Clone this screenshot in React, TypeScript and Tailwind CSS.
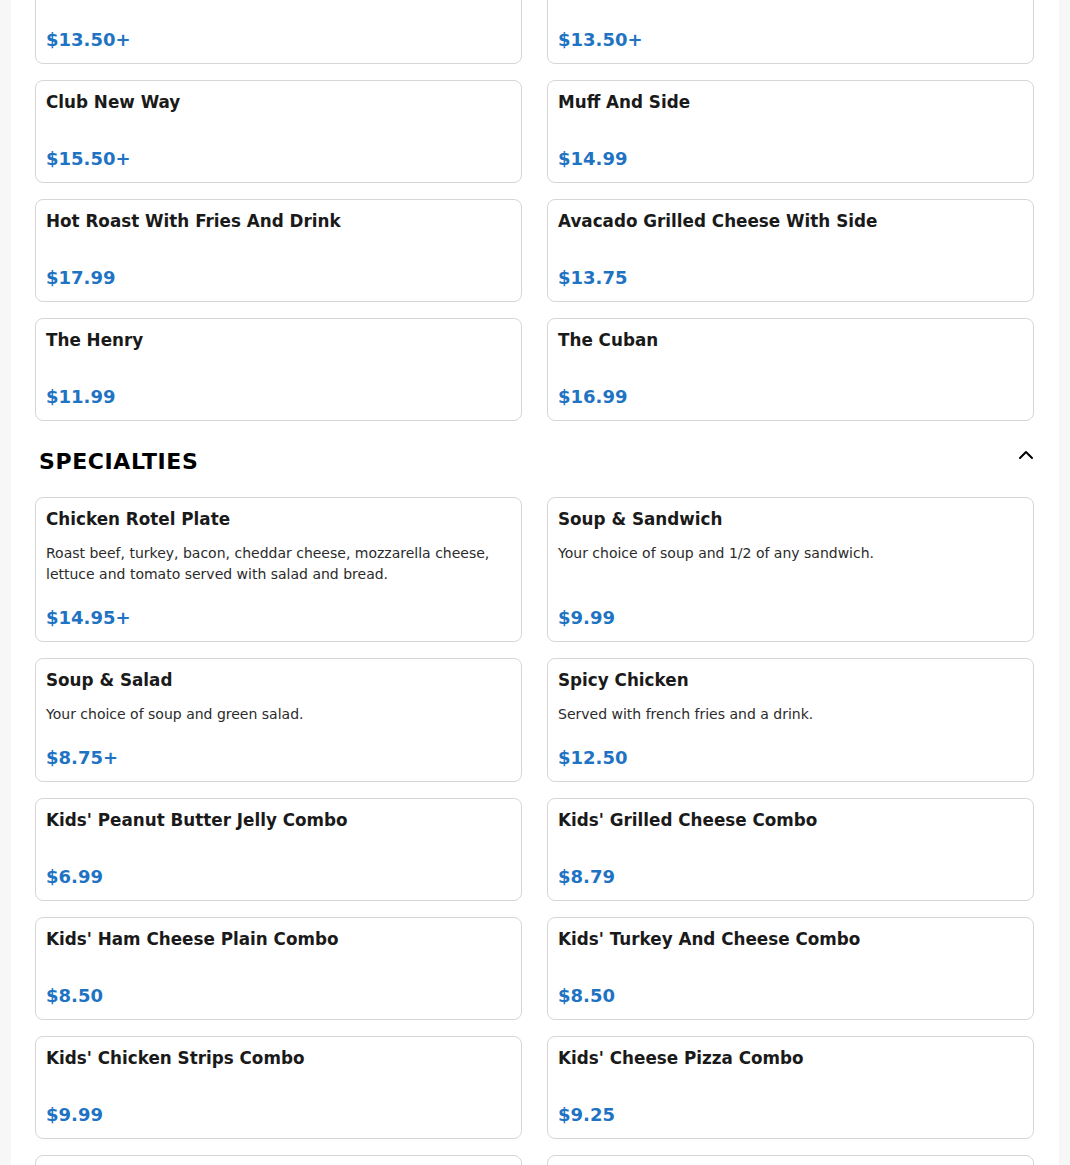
import { ChevronUp } from "lucide-react";

type Item = { name: string; desc?: string; price: string };

const sandwiches: Item[] = [
  { name: "Turkey Club", price: "$13.50+" },
  { name: "Ham Club", price: "$13.50+" },
  { name: "Club New Way", price: "$15.50+" },
  { name: "Muff And Side", price: "$14.99" },
  { name: "Hot Roast With Fries And Drink", price: "$17.99" },
  { name: "Avacado Grilled Cheese With Side", price: "$13.75" },
  { name: "The Henry", price: "$11.99" },
  { name: "The Cuban", price: "$16.99" },
];

const specialties: Item[] = [
  {
    name: "Chicken Rotel Plate",
    desc: "Roast beef, turkey, bacon, cheddar cheese, mozzarella cheese, lettuce and tomato served with salad and bread.",
    price: "$14.95+",
  },
  { name: "Soup & Sandwich", desc: "Your choice of soup and 1/2 of any sandwich.", price: "$9.99" },
  { name: "Soup & Salad", desc: "Your choice of soup and green salad.", price: "$8.75+" },
  { name: "Spicy Chicken", desc: "Served with french fries and a drink.", price: "$12.50" },
  { name: "Kids' Peanut Butter Jelly Combo", price: "$6.99" },
  { name: "Kids' Grilled Cheese Combo", price: "$8.79" },
  { name: "Kids' Ham Cheese Plain Combo", price: "$8.50" },
  { name: "Kids' Turkey And Cheese Combo", price: "$8.50" },
  { name: "Kids' Chicken Strips Combo", price: "$9.99" },
  { name: "Kids' Cheese Pizza Combo", price: "$9.25" },
  { name: "Kids' Corn Dog Combo", price: "$7.99" },
  { name: "Kids' Grilled Chicken Combo", price: "$9.25" },
];

const MenuCard = ({ item }: { item: Item }) => (
  <div className="flex flex-col rounded-lg border border-[#d6d6d6] bg-white px-[10px] pt-[10px] pb-[10px]">
    <h3 className="text-[16.8px] leading-[23px] font-bold text-[#1a1a1a]">{item.name}</h3>
    <p className="mt-[12px] text-[14px] leading-[21px] text-[#2b2b2b]">{item.desc}</p>
    <div className="mt-auto pt-[20px] text-[18px] leading-[26px] font-bold text-[#1f73c3]">
      {item.price}
    </div>
  </div>
);

export default function App() {
  return (
    <div className="min-h-screen bg-[#f7f7f7] font-['DejaVu_Sans',sans-serif]">
      <div className="mx-[11px] min-h-screen bg-white pl-[24px] pr-[25px]">
        <div className="-mt-[39px] grid grid-cols-2 gap-x-[25px] gap-y-[16px]">
          {sandwiches.map((item) => (
            <MenuCard key={item.name} item={item} />
          ))}
        </div>

        {/* Specialties */}
        <div className="mt-[25px] mb-[19px] flex items-start justify-between pl-[4px]">
          <h2 className="text-[22px] leading-[32px] font-bold tracking-[0.6px] text-black">SPECIALTIES</h2>
          <ChevronUp className="-mt-[3px] -mr-[4px] h-6 w-6 text-black" strokeWidth={2} />
        </div>

        <div className="grid grid-cols-2 gap-x-[25px] gap-y-[16px] pb-10">
          {specialties.map((item) => (
            <MenuCard key={item.name} item={item} />
          ))}
        </div>
      </div>
    </div>
  );
}
